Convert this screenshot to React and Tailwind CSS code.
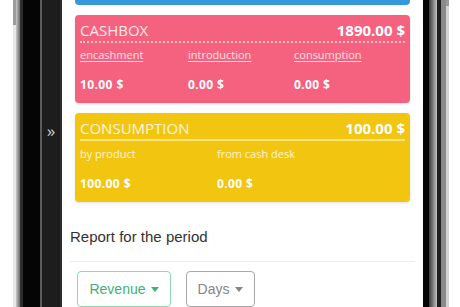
import React from "react";

const cardFont = { fontFamily: '"Open Sans", "Noto Sans", sans-serif' };

function Caret({ className }) {
	return (
		<svg width="8" height="5" viewBox="0 0 8 5" className={className}>
			<path d="M0 0 L8 0 L4 5 Z" fill="currentColor" />
		</svg>
	);
}

function StatCol({ label, value, underline, width }) {
	return (
		<div className={"flex flex-col " + width}>
			<span
				className={
					"text-[11px] leading-[14px] text-white/80 " +
					(underline ? "underline underline-offset-2" : "")
				}
			>
				{label}
			</span>
			<span className="mt-[15px] text-[12px] leading-[16px] font-bold tracking-[0.4px] text-white">
				{value}
			</span>
		</div>
	);
}

export default function App() {
	return (
		<div className="w-[460px] h-[307px] overflow-hidden flex bg-white">
			{/* left side of the phone */}
			<div className="flex h-full w-[62px] shrink-0">
				<div className="w-[13px] bg-white" />
				<div className="w-[3px] flex flex-col">
					<div className="h-[25px] bg-[#9c9c9c]" />
					<div className="flex-1 bg-[#e6e6e6]" />
				</div>
				<div className="w-[4px] bg-gradient-to-r from-[#c9c9c9] to-[#6d6d6d]" />
				<div className="w-[3px] bg-[#2e2e2e]" />
				<div className="w-[17px] bg-[#050505]" />
				<div className="w-[2px] bg-[#5c5c5c]" />
				<div className="w-[18px] bg-[#1d1d1d] flex justify-center pt-[121px]">
					<span className="text-[17px] leading-[20px] text-[#c4c4c4]">»</span>
				</div>
				<div className="w-[2px] bg-[#2c2c2c]" />
			</div>

			{/* screen */}
			<div className="w-[361px] shrink-0 h-full bg-white flex flex-col" style={cardFont}>
				<div className="mx-[13px] h-[5px] bg-[#3598dc] rounded-b-[4px]" />

				<div className="mt-[10px] mx-[13px] h-[88px] bg-[#f4627f] rounded-[4px] shadow-sm px-[5px] pt-[6px]">
					<div className="flex justify-between items-end h-[22px] border-b-[2px] border-dotted border-white/60">
						<span className="text-[15px] leading-[18px] text-white/85 pb-[2px]">CASHBOX</span>
						<span className="text-[15px] leading-[18px] font-bold text-white pb-[2px]">1890.00 $</span>
					</div>
					<div className="flex mt-[5px]">
						<StatCol label="encashment" value="10.00 $" underline width="w-[108px]" />
						<StatCol label="introduction" value="0.00 $" underline width="w-[106px]" />
						<StatCol label="consumption" value="0.00 $" underline width="w-[100px]" />
					</div>
				</div>

				<div className="mt-[10px] mx-[13px] h-[89px] bg-[#f2c511] rounded-[4px] shadow-sm px-[5px] pt-[6px]">
					<div className="flex justify-between items-end h-[22px] border-b-[2px] border-[#fbe57a]">
						<span className="text-[15px] leading-[18px] text-white/85 pb-[2px]">CONSUMPTION</span>
						<span className="text-[15px] leading-[18px] font-bold text-white pb-[2px]">100.00 $</span>
					</div>
					<div className="flex mt-[6px]">
						<StatCol label="by product" value="100.00 $" width="w-[137px]" />
						<StatCol label="from cash desk" value="0.00 $" width="w-[137px]" />
					</div>
				</div>

				<div className="mx-[8px] mt-[26px]" style={{ fontFamily: '"Liberation Sans", Arial, sans-serif' }}>
					<div className="text-[15px] leading-[18px] text-[#333]">Report for the period</div>
					<div className="mt-[15px] h-px bg-[#ececec]" />
					<div className="flex gap-[15px] mt-[9px] ml-[7px]">
						<div className="flex items-center gap-[5px] h-[36px] w-[94px] justify-center border border-[#8fd6b2] rounded-[4px] text-[#3fb07a]">
							<span className="text-[14px]">Revenue</span>
							<Caret />
						</div>
						<div className="flex items-center gap-[6px] h-[36px] w-[69px] justify-center border border-[#a8a8a8] rounded-[4px] text-[#858585]">
							<span className="text-[14px]">Days</span>
							<Caret />
						</div>
					</div>
				</div>
			</div>

			{/* right side of the phone */}
			<div className="flex h-full flex-1">
				<div className="w-[6px] bg-[#050505]" />
				<div className="w-[8px] bg-gradient-to-r from-[#3a3a3a] to-[#c4c4c4]" />
				<div className="w-[4px] bg-[#1e1e1e]" />
				<div className="w-[5px] bg-[#8a8a8a]" />
				<div className="w-[3px] flex flex-col">
					<div className="h-[6px] bg-[#9a9a9a]" />
					<div className="flex-1 bg-[#d4d4d4]" />
				</div>
				<div className="flex-1 bg-white" />
			</div>
		</div>
	);
}
